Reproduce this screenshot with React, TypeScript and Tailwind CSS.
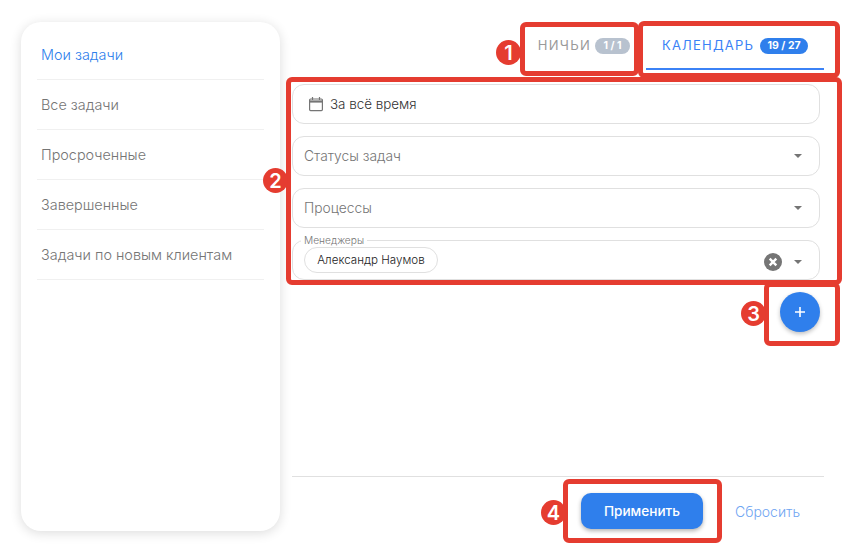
import React from "react";

const F = { fontFamily: '"Inter", "Noto Sans", sans-serif' };

function Caret() {
  return <span className="w-0 h-0 border-x-[4px] border-x-transparent border-t-[4px] border-t-[#757575]" />;
}

function Frame({ c }: { c: string }) {
  return <div className={`absolute border-[5px] border-[#e53c30] rounded-[6px] pointer-events-none ${c}`} />;
}

function Num({ n, c }: { n: string; c: string }) {
  return (
    <div className={`absolute w-[25px] h-[25px] rounded-full bg-[#e53c30] text-white text-[20px] font-semibold flex items-center justify-center ${c}`}>
      {n}
    </div>
  );
}

const items = ["Мои задачи", "Все задачи", "Просроченные", "Завершенные", "Задачи по новым клиентам"];

export default function App() {
  return (
    <div className="relative w-[847px] h-[555px] bg-white overflow-hidden flex" style={F}>
      <aside className="ml-[21px] mt-[22px] w-[259px] h-[509px] bg-white rounded-[20px] shadow-[0_2px_12px_rgba(0,0,0,0.14)] px-[16px] pt-[8px] shrink-0">
        {items.map((t, i) => (
          <div key={t} className={`h-[50px] flex items-center pl-[4px] border-b border-[#f0f0f0] text-[14.4px] font-light ${i === 0 ? "text-[#2f7fec]" : "text-[#757575]"}`}>
            {t}
          </div>
        ))}
      </aside>

      <main className="ml-[12px] w-[532px] flex flex-col">
        <div className="h-[62px] pt-[22px] flex justify-end items-start">
          <div className="h-[48px] flex items-center gap-[4px] mr-[16px]">
            <span className="text-[13px] tracking-[1.3px] text-[#9a9a9a]">НИЧЬИ</span>
            <span className="w-[35px] h-[16px] rounded-full bg-[#b8c2cf] text-white text-[10.5px] font-bold flex items-center justify-center">1 / 1</span>
          </div>
          <div className="w-[178px] h-[48px] border-b-[2px] border-[#3b82f6] flex items-center pl-[16px] gap-[6px] pt-[1px]">
            <span className="text-[13px] tracking-[1.2px] text-[#3b82f6]">КАЛЕНДАРЬ</span>
            <span className="w-[48px] h-[16px] rounded-full bg-[#2f7fec] text-white text-[10.5px] font-bold flex items-center justify-center">19 / 27</span>
          </div>
        </div>

        <div className="mt-[22px] w-[528px] flex flex-col gap-[12px]">
          <div className="h-[40px] border border-[#e0e0e0] rounded-[12px] flex items-center pl-[15px] gap-[6px] text-[13.4px] font-light text-[#333]">
            <svg width="16" height="16" viewBox="0 0 16 16" fill="none" stroke="#757575" strokeWidth="1.2">
              <rect x="1.6" y="3" width="12.8" height="11.6" rx="1" />
              <path d="M1.6 5.5h12.8" strokeWidth="2.2" />
              <path d="M4.5 1v3M11.5 1v3" />
            </svg>
            За всё время
          </div>
          <div className="h-[40px] border border-[#e0e0e0] rounded-[12px] flex items-center justify-between pl-[11px] pr-[17px] text-[13.8px] font-light text-[#757575]">
            Статусы задач
            <Caret />
          </div>
          <div className="h-[40px] border border-[#e0e0e0] rounded-[12px] flex items-center justify-between pl-[11px] pr-[17px] text-[13.8px] font-light text-[#757575]">
            Процессы
            <Caret />
          </div>
          <div className="relative h-[40px] border border-[#e0e0e0] rounded-[12px] flex items-center justify-between pl-[11px] pr-[17px]">
            <span className="absolute left-[8px] -top-[7px] bg-white px-[3px] text-[10.2px] leading-[13px] font-light text-[#757575]">Менеджеры</span>
            <span className="h-[26px] w-[134px] border border-[#e0e0e0] rounded-full flex items-center justify-center pt-[1px] text-[11.6px] font-light text-[#222]">Александр Наумов</span>
            <div className="flex items-center gap-[12px] pt-[4px]">
              <svg width="18" height="18" viewBox="0 0 18 18">
                <circle cx="9" cy="9" r="9" fill="#757575" />
                <path d="M5.7 5.7l6.6 6.6M12.3 5.7l-6.6 6.6" stroke="#fff" strokeWidth="2.4" />
              </svg>
              <Caret />
            </div>
          </div>
        </div>

        <div className="w-[528px] flex justify-end mt-[12px]">
          <button className="w-[40px] h-[40px] rounded-full bg-[#2f7fec] shadow-[0_2px_4px_rgba(0,0,0,0.25)] flex items-center justify-center">
            <svg width="12" height="12" viewBox="0 0 12 12" stroke="#fff" strokeWidth="1.6"><path d="M6 1v10M1 6h10" /></svg>
          </button>
        </div>

        <div className="mt-[144px] w-[532px] border-t border-[#e0e0e0] flex items-center pt-[16px]">
          <button className="ml-[289px] w-[122px] h-[36px] rounded-[10px] bg-[#2f7fec] text-white text-[13.6px] font-medium shadow-[0_2px_4px_rgba(0,0,0,0.3)]">Применить</button>
          <span className="ml-[32px] text-[14px] font-light text-[#6fa5f2]">Сбросить</span>
        </div>
      </main>

      <Frame c="left-[520px] top-[22px] w-[119px] h-[54px]" />
      <Frame c="left-[638px] top-[21px] w-[202px] h-[57px]" />
      <Frame c="left-[286px] top-[77px] w-[556px] h-[208px]" />
      <Frame c="left-[764px] top-[282px] w-[76px] h-[64px]" />
      <Frame c="left-[563px] top-[479px] w-[159px] h-[64px]" />

      <Num n="1" c="left-[496px] top-[40px]" />
      <Num n="2" c="left-[263px] top-[168px]" />
      <Num n="3" c="left-[741px] top-[301px]" />
      <Num n="4" c="left-[541px] top-[500px]" />
    </div>
  );
}
